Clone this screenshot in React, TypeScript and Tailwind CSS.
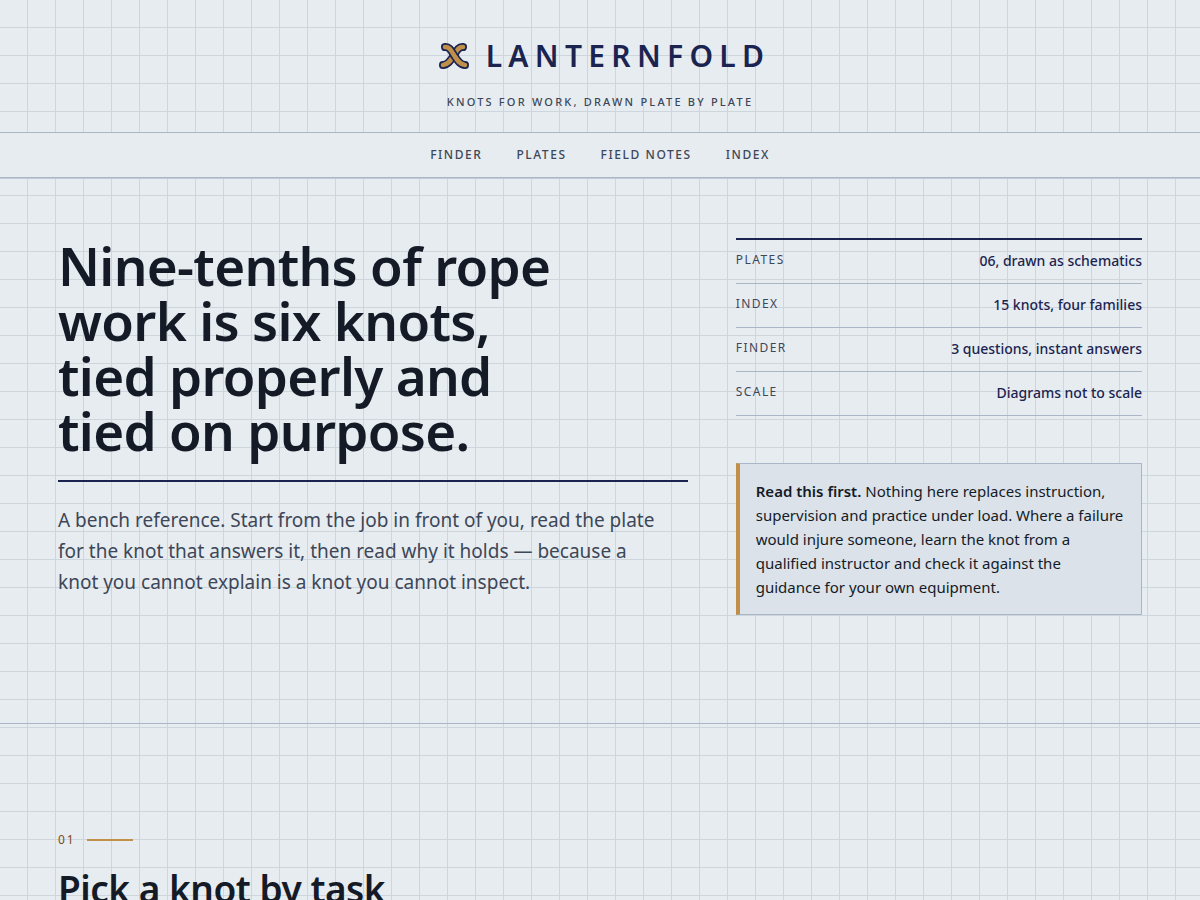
import React from "react";

const navItems = [
  { label: "Finder", href: "#finder" },
  { label: "Plates", href: "#plates" },
  { label: "Field notes", href: "#notes" },
  { label: "Index", href: "#index" },
];

const facts = [
  { term: "Plates", detail: "06, drawn as schematics" },
  { term: "Index", detail: "15 knots, four families" },
  { term: "Finder", detail: "3 questions, instant answers" },
  { term: "Scale", detail: "Diagrams not to scale" },
];

const KnotMark = () => {
  return (
    <svg
      className="h-7 w-10"
      viewBox="-8 0 40 28"
      fill="none"
      strokeLinecap="round"
      aria-hidden="true"
    >
      <path
        d="M25 5 C20 4.5 18.5 9.5 15.5 14 C12.5 18.5 10 22.8 5 23"
        stroke="#1b2450"
        strokeWidth="8"
      />
      <path
        d="M25 5 C20 4.5 18.5 9.5 15.5 14 C12.5 18.5 10 22.8 5 23"
        stroke="#c08f4a"
        strokeWidth="4.6"
      />
      <path
        d="M7 5 C12 4.5 13.5 9.5 16.5 14 C19.5 18.5 22 22.8 27 23"
        stroke="#1b2450"
        strokeWidth="8"
      />
      <path
        d="M7 5 C12 4.5 13.5 9.5 16.5 14 C19.5 18.5 22 22.8 27 23"
        stroke="#c08f4a"
        strokeWidth="4.6"
      />
    </svg>
  );
};

const Header = () => {
  return (
    <header className="border-b border-[#c3ccd7]">
      <div className="flex flex-col items-center pt-8 pb-5">
        <a href="#top" className="flex items-center gap-4 text-[#1b2450]">
          <KnotMark />
          <span className="text-[30px] leading-[48px] font-semibold uppercase tracking-[0.21em]">
            Lanternfold
          </span>
        </a>
        <p className="mt-3 text-[11px] leading-5 font-medium uppercase tracking-[0.2em] text-[#3d4757]">
          Knots for work, drawn plate by plate
        </p>
      </div>
      <nav className="border-y border-[#a8b6c6] bg-[#e7ecf1]">
        <ul className="flex justify-center gap-[34px] py-3">
          {navItems.map((item) => (
            <li key={item.label}>
              <a
                href={item.href}
                className="block text-xs leading-5 font-medium uppercase tracking-[0.13em] text-[#3d4757]"
              >
                {item.label}
              </a>
            </li>
          ))}
        </ul>
      </nav>
    </header>
  );
};

const Hero = () => {
  return (
    <section className="border-b border-[#a8b6c6]">
      <div className="grid grid-cols-[1.55fr_1fr] gap-12 px-[58px] pt-[59px] pb-[108px]">
        <div>
          <div className="border-b-2 border-[#1b2450] pb-[22px]">
            <h1 className="max-w-[540px] text-[53px] leading-[55px] font-semibold tracking-[-0.013em]">
              Nine-tenths of rope work is six knots, tied properly and tied on
              purpose.
            </h1>
          </div>
          <p className="mt-[23px] max-w-[610px] text-[19px] leading-[31px] text-[#3d4757]">
            A bench reference. Start from the job in front of you, read the
            plate for the knot that answers it, then read why it holds — because
            a knot you cannot explain is a knot you cannot inspect.
          </p>
        </div>
        <div>
          <dl className="border-t-2 border-[#1b2450]">
            {facts.map((fact) => (
              <div
                key={fact.term}
                className="flex justify-between border-b border-[#a8b6c6] pt-[10px] pb-[11px]"
              >
                <dt className="text-xs leading-5 uppercase tracking-[0.12em] text-[#3d4757]">
                  {fact.term}
                </dt>
                <dd className="text-sm leading-[22px] font-medium text-[#1b2450]">
                  {fact.detail}
                </dd>
              </div>
            ))}
          </dl>
          <aside className="mt-[47px] border border-l-4 border-[#a8b6c6] border-l-[#c08f4a] bg-[#dbe2ea] px-4 py-[15px] text-[15px] leading-6">
            <strong className="font-semibold">Read this first.</strong> Nothing
            here replaces instruction, supervision and practice under load.
            Where a failure would injure someone, learn the knot from a
            qualified instructor and check it against the guidance for your own
            equipment.
          </aside>
        </div>
      </div>
    </section>
  );
};

const Finder = () => {
  return (
    <section id="finder" className="px-[58px] pt-[106px]">
      <p className="flex items-center gap-[11px] text-xs leading-5 tracking-[0.16em] text-[#7a4a1c]">
        01
        <span className="h-0.5 w-[46px] bg-[#c08f4a]"></span>
      </p>
      <h2 className="mt-[17px] text-[37px] leading-[44px] font-semibold tracking-[-0.013em]">
        Pick a knot by task
      </h2>
    </section>
  );
};

const App = () => {
  return (
    <div
      id="top"
      className="min-h-screen bg-[#e7ecf1] bg-[repeating-linear-gradient(to_right,transparent_0_27px,#cdd5dd_27px_28px),repeating-linear-gradient(to_bottom,transparent_0_27px,#cdd5dd_27px_28px)] font-['Noto_Sans',sans-serif] text-[#151b26]"
    >
      <Header />
      <main>
        <Hero />
        <Finder />
      </main>
    </div>
  );
};

export default App;
